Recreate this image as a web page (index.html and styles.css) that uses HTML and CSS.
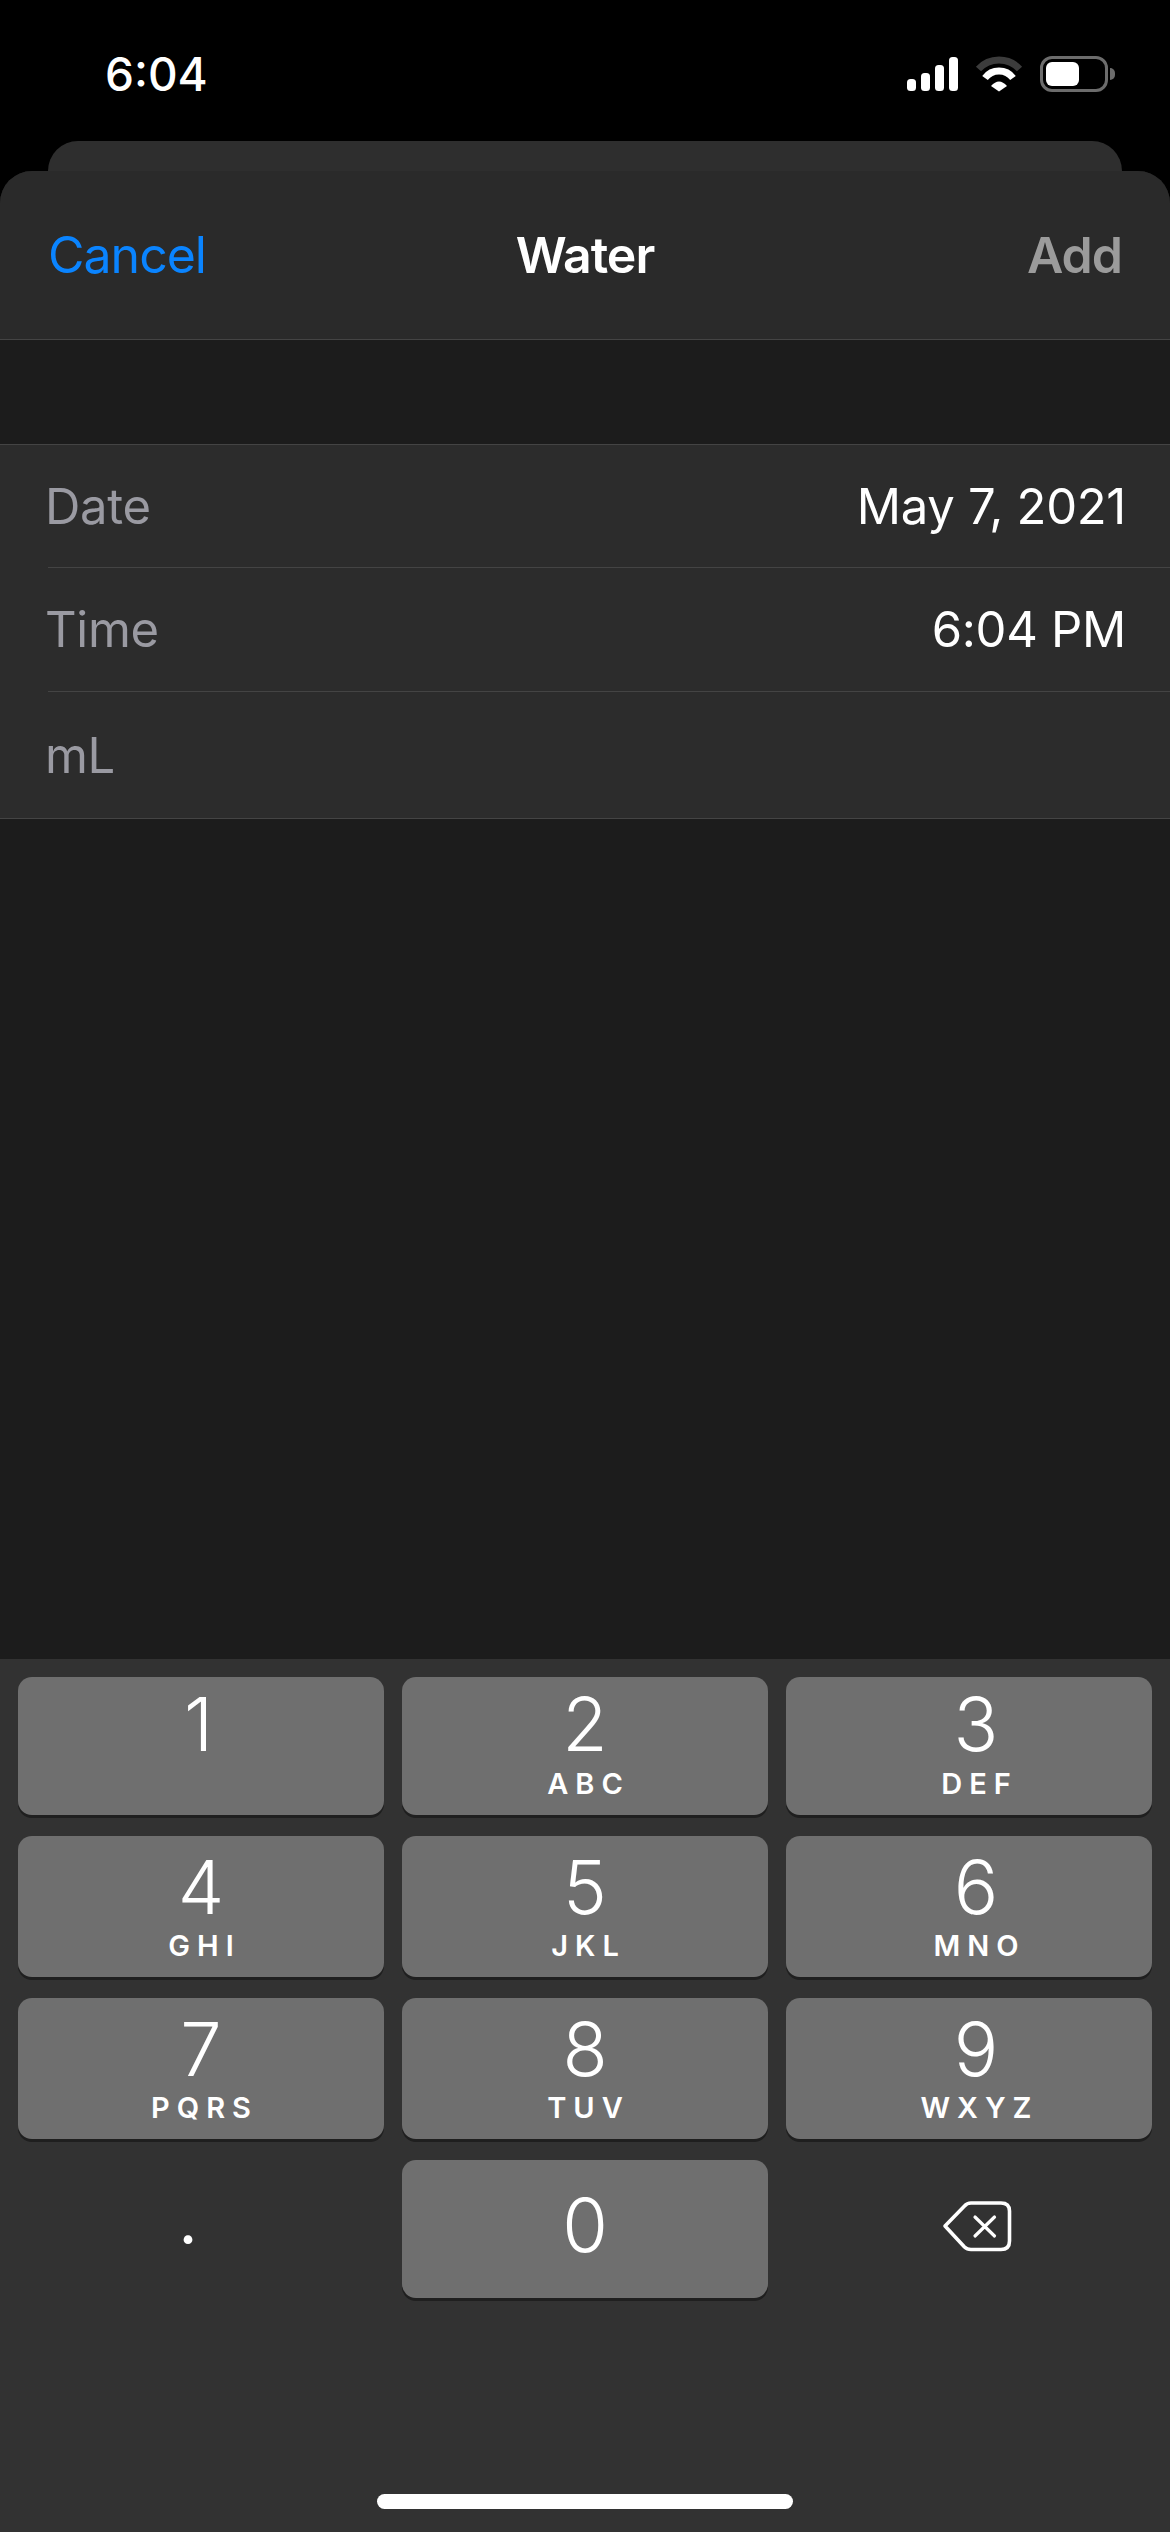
FILE: index.html
```html
<!DOCTYPE html>
<html lang="en">
<head>
    <meta charset="UTF-8">
    <meta name="viewport" content="width=device-width, initial-scale=1.0">
    <title>Water</title>
    <link rel="stylesheet" href="styles.css">
</head>
<body>
    <div id="status-bar">
        <span id="clock">6:04</span>
        <div id="status-icons">
            <svg class="signal-icon" width="51" height="34" viewBox="0 0 51 34" fill="#fff">
                <rect x="0" y="22" width="9" height="12" rx="3.5"/>
                <rect x="14" y="16" width="9" height="18" rx="3.5"/>
                <rect x="28" y="8" width="9" height="26" rx="3.5"/>
                <rect x="42" y="0" width="9" height="34" rx="3.5"/>
            </svg>
            <svg class="wifi-icon" width="48" height="36" viewBox="0 0 48 36" fill="none">
                <path d="M3.5 13A27.8 27.8 0 0 1 44.5 13" stroke="#3c3c3c" stroke-width="7"/>
                <path d="M10 22A17.5 17.5 0 0 1 38 22" stroke="#fff" stroke-width="7"/>
                <path d="M16 30Q24 21 32 30L24 35.5Z" fill="#fff"/>
            </svg>
            <div class="battery">
                <div class="battery-fill"></div>
            </div>
            <div class="battery-nub"></div>
        </div>
    </div>

    <div id="back-card"></div>

    <div id="sheet">
        <div id="nav">
            <span class="nav-cancel">Cancel</span>
            <span class="nav-title">Water</span>
            <span class="nav-add">Add</span>
        </div>

        <div id="form">
            <div class="form-row form-row-first">
                <span class="form-label">Date</span>
                <span class="form-value">May 7, 2021</span>
            </div>
            <div class="form-row">
                <span class="form-label">Time</span>
                <span class="form-value">6:04 PM</span>
            </div>
            <div class="form-row form-row-last">
                <span class="form-label">mL</span>
            </div>
        </div>

        <div id="spacer"></div>

        <div id="keyboard">
            <div id="keys">
                <div class="key key-first"><span class="digit digit-one">1</span></div>
                <div class="key key-first"><span class="digit">2</span><span class="letters">ABC</span></div>
                <div class="key key-first key-right"><span class="digit">3</span><span class="letters">DEF</span></div>
                <div class="key"><span class="digit">4</span><span class="letters">GHI</span></div>
                <div class="key"><span class="digit">5</span><span class="letters">JKL</span></div>
                <div class="key key-right"><span class="digit">6</span><span class="letters">MNO</span></div>
                <div class="key"><span class="digit">7</span><span class="letters">PQRS</span></div>
                <div class="key"><span class="digit">8</span><span class="letters">TUV</span></div>
                <div class="key key-right"><span class="digit">9</span><span class="letters">WXYZ</span></div>
                <div class="key-plain key-dot">.</div>
                <div class="key key-zero"><span class="digit">0</span></div>
                <div class="key-plain key-delete">
                    <svg width="70" height="52" viewBox="0 0 70 52" fill="none" stroke="#fff" stroke-linecap="round" stroke-linejoin="round">
                        <path d="M3 26L22.500 6Q25 3 29 3H59Q67.500 3 67.500 11V41Q67.500 49.500 59 49.500H29Q25 49.500 22.500 47Z" stroke-width="3.600"/>
                        <path d="M33 17L52.500 36M52.500 17L33 36" stroke-width="3.200"/>
                    </svg>
                </div>
            </div>
            <div id="home-indicator"></div>
        </div>
    </div>
</body>
</html>
```

FILE: styles.css
```css
* {margin: 0; padding: 0; box-sizing: border-box;}

html, body {
    height: 100%;
}
body {
    display: flex;
    flex-direction: column;
    height: 2532px;
    background-color: #000;
    font-family: Inter, "Liberation Sans", sans-serif;
    color: #fff;
    overflow: hidden;
}

#status-bar {
    display: flex;
    justify-content: space-between;
    align-items: center;
    height: 141px;
    padding: 7px 55px 0 105px;
}
#clock {
    font-size: 46px;
    font-weight: 500;
}
#status-icons {
    display: flex;
    align-items: center;
}
.signal-icon {
    margin-right: 17px;
}
.wifi-icon {
    margin-right: 17px;
}
.battery {
    width: 68px;
    height: 36px;
    padding: 3px;
    border: 3px solid #6c6c6c;
    border-radius: 12px;
}
.battery-fill {
    width: 33px;
    height: 100%;
    background-color: #fff;
    border-radius: 6px;
}
.battery-nub {
    width: 5px;
    height: 12px;
    margin-left: 2px;
    background-color: #6c6c6c;
    border-radius: 0 6px 6px 0;
}

#back-card {
    flex: none;
    height: 30px;
    margin: 0 48px;
    background-color: #2e2e2e;
    border-radius: 30px 30px 0 0;
}

#sheet {
    flex: 1;
    display: flex;
    flex-direction: column;
    background-color: #1c1c1c;
    border-radius: 32px 32px 0 0;
    overflow: hidden;
}

#nav {
    display: grid;
    grid-template-columns: 1fr auto 1fr;
    align-items: center;
    height: 169px;
    padding: 0 48px;
    background-color: #2a2a2a;
    border-bottom: 1px solid #444;
    font-size: 50px;
    letter-spacing: -1px;
}
.nav-cancel {
    color: #0a84ff;
}
.nav-title {
    font-weight: 600;
}
.nav-add {
    justify-self: end;
    font-weight: 600;
    color: #9b9b9b;
}

#form {
    margin-top: 104px;
    padding-left: 48px;
    background-color: #2c2c2c;
    border-top: 1px solid #444;
    border-bottom: 1px solid #444;
}
.form-row {
    display: flex;
    justify-content: space-between;
    align-items: center;
    height: 124px;
    padding-right: 44px;
    border-bottom: 1px solid #444;
    font-size: 49px;
    letter-spacing: -0.3px;
}
.form-row-first {
    height: 123px;
}
.form-row-last {
    height: 126px;
    border-bottom: none;
}
.form-label {
    margin-left: -3px;
    color: #9a9aa2;
}

#spacer {
    flex: 1;
}

#keyboard {
    flex: none;
    display: flex;
    flex-direction: column;
    height: 873px;
    padding: 18px 18px 0;
    background-color: #323232;
}
#keys {
    display: grid;
    grid-template-columns: 366px 366px 366px;
    grid-template-rows: 138px 141px 141px 138px;
    gap: 21px 18px;
}
.key {
    display: flex;
    flex-direction: column;
    align-items: center;
    padding-top: 6px;
    background-color: #6f6f6f;
    border-radius: 14px;
    box-shadow: 0 3px 0 #1f1f1f;
}
.key-first {
    padding-top: 2px;
}
.key-right {
    padding-left: 14px;
}
.key-zero {
    padding-top: 20px;
}
.key-plain {
    display: flex;
    align-items: center;
    justify-content: center;
}
.key-dot {
    padding: 0 26px 18px 0;
    font-size: 66px;
    font-weight: 400;
}
.key-delete {
    padding: 0 0 6px 16px;
}
.digit {
    font-size: 74px;
    font-weight: 300;
    line-height: 90px;
}
.digit-one {
    margin-right: 5px;
}
.letters {
    margin-top: -3px;
    font-size: 29px;
    font-weight: 600;
    line-height: 34px;
    letter-spacing: 7px;
    text-indent: 7px;
}
.key-first .letters {
    margin-top: -2px;
}

#home-indicator {
    width: 416px;
    height: 15px;
    margin: 196px auto 0;
    background-color: #fff;
    border-radius: 8px;
}
```
